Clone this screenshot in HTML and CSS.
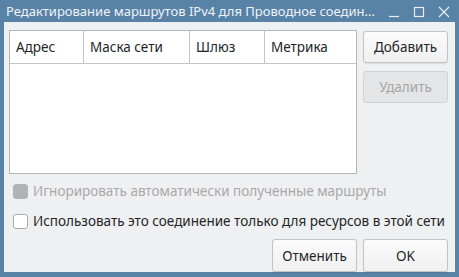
FILE: index.html
```html
<!DOCTYPE html>
<html lang="ru">
<head>
	<meta charset="UTF-8">
	<title>Маршруты IPv4</title>
	<link rel="stylesheet" href="styles.css">
</head>
<body>
	<div class="window">
		<div class="titlebar">
			<div class="title">Редактирование маршрутов IPv4 для Проводное соедин...</div>
			<div class="controls">
				<svg width="14" height="14" viewBox="0 0 14 14"><path d="M2 11.5h10" stroke="#e6edf3" stroke-width="1.2"/></svg>
				<svg width="14" height="14" viewBox="0 0 14 14"><rect x="2.5" y="2.5" width="9" height="9" fill="none" stroke="#e6edf3" stroke-width="1.2"/></svg>
				<svg width="14" height="14" viewBox="0 0 14 14"><path d="M2 2l10 10M12 2L2 12" stroke="#e6edf3" stroke-width="1.2"/></svg>
			</div>
		</div>
		<div class="content">
			<div class="top">
				<div class="table">
					<div class="thead">
						<div class="th c1">Адрес</div>
						<div class="th c2">Маска сети</div>
						<div class="th c3">Шлюз</div>
						<div class="th c4">Метрика</div>
					</div>
				</div>
				<div class="side">
					<button class="btn">Добавить</button>
					<button class="btn disabled">Удалить</button>
				</div>
			</div>
			<label class="check disabled"><span class="box"></span>Игнорировать автоматически полученные маршруты</label>
			<label class="check"><span class="box"></span>Использовать это соединение только для ресурсов в этой сети</label>
			<div class="footer">
				<button class="btn">Отменить</button>
				<button class="btn">OK</button>
			</div>
		</div>
	</div>
</body>
</html>
```
FILE: styles.css
```css
html, body{
	margin: 0;
	height: 100%;
}
body{
	font-family: "Noto Sans", "Open Sans", sans-serif;
	font-size: 13.5px;
	color: #232627;
}
.window{
	height: 100%;
	display: flex;
	flex-direction: column;
	background: #5882a6;
	padding: 0 4px 5px 4px;
	box-sizing: border-box;
}
.titlebar{
	height: 22px;
	display: flex;
	align-items: center;
	justify-content: space-between;
	color: #eef3f7;
	font-size: 13px;
}
.title{
	padding-left: 2px;
	white-space: nowrap;
}
.controls{
	display: flex;
	gap: 11px;
	padding-right: 4px;
	padding-top: 2px;
}
.controls svg{
	display: block;
}
.content{
	flex: 1;
	background: #eff0f1;
	padding: 8px 7px 0 5px;
	display: flex;
	flex-direction: column;
}
.top{
	display: flex;
	gap: 6px;
}
.table{
	flex: 1;
	height: 142px;
	background: #fff;
	border: 1px solid #b4b6b8;
}
.thead{
	display: flex;
	height: 32px;
	border-bottom: 1px solid #c4c5c6;
}
.th{
	display: flex;
	align-items: center;
	padding-left: 6px;
	border-right: 1px solid #c4c5c6;
	box-sizing: border-box;
}
.c1{ width: 74px; }
.c2{ width: 106px; }
.c3{ width: 75px; }
.c4{ flex: 1; border-right: none; }
.side{
	display: flex;
	flex-direction: column;
	gap: 8px;
	padding-top: 1px;
}
.btn{
	width: 85px;
	height: 32px;
	font: inherit;
	color: #232627;
	background: linear-gradient(#fbfbfb, #f0f0f0);
	border: 1px solid #c2c3c4;
	border-radius: 3px;
	box-shadow: 0 1px 1px rgba(0,0,0,0.08);
	padding: 0;
}
.btn.disabled{
	background: #e4e5e6;
	color: #a5a6a7;
	border-color: #d2d3d4;
	box-shadow: none;
}
.check{
	display: flex;
	align-items: center;
	gap: 5px;
	height: 16px;
	padding-left: 4px;
}
.check:first-of-type{
	margin-top: 9px;
}
.check + .check{
	margin-top: 14px;
}
.box{
	width: 13px;
	height: 13px;
	border: 1px solid #a9aaab;
	border-radius: 3px;
	background: #fff;
}
.check.disabled{
	color: #a8a9aa;
}
.check.disabled .box{
	background: #b1b2b3;
	border-color: #b1b2b3;
}
.footer{
	margin-top: 10px;
	display: flex;
	justify-content: flex-end;
	gap: 6px;
}
.footer .btn{
	height: 33px;
}
```
